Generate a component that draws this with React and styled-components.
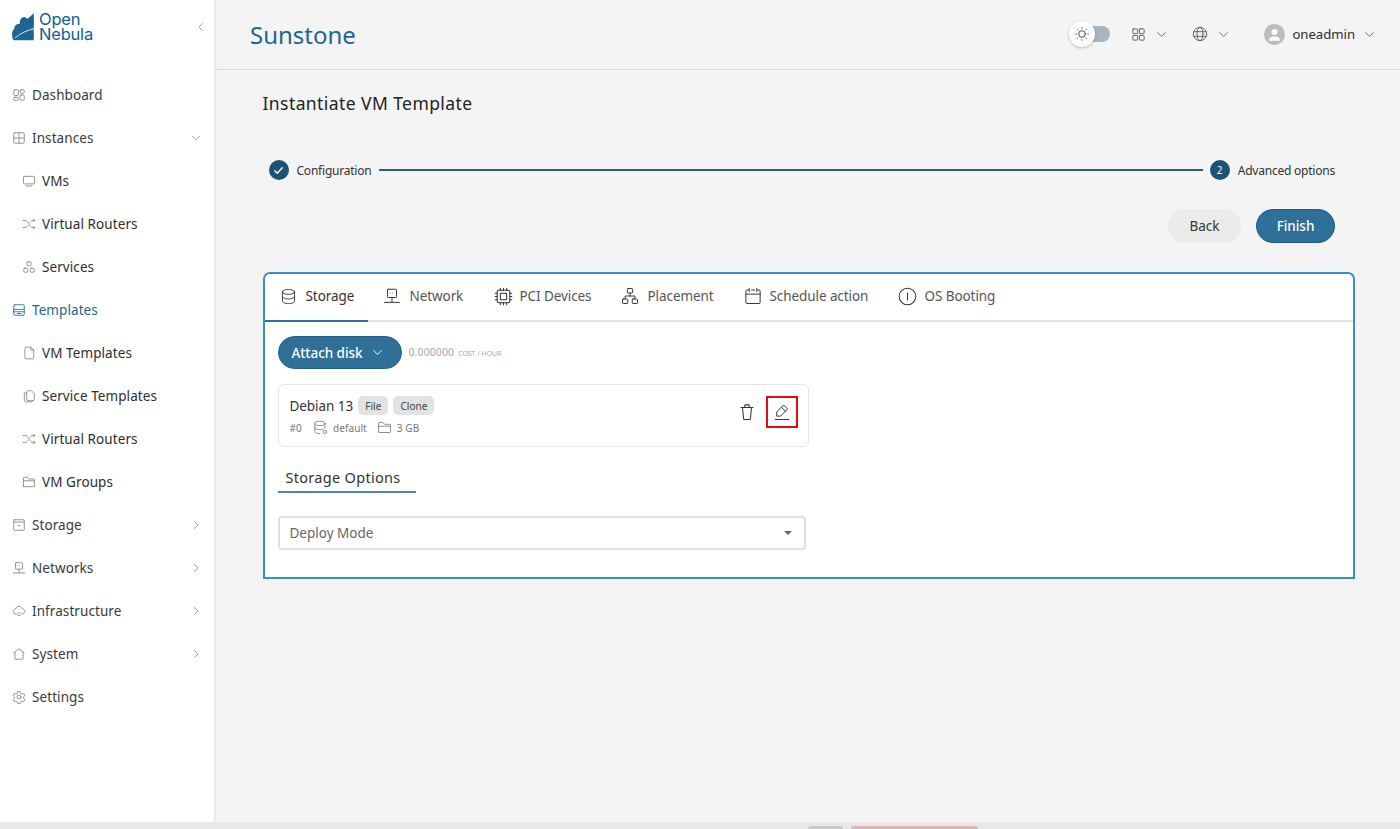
import React from "react";
import styled, { createGlobalStyle } from "styled-components";

const FONT = `"Noto Sans", "Open Sans", sans-serif`;

const Global = createGlobalStyle`
  html, body { margin: 0; padding: 0; height: 100%; background: #f4f4f4; }
  #root { height: 829px; }
  * { box-sizing: border-box; }
  body { font-family: ${FONT}; color: #2b2b2b; overflow: hidden; }
`;

const Svg = styled.svg`
  width: ${(p) => p.$size || 16}px;
  height: ${(p) => p.$size || 16}px;
  flex: none;
  fill: none;
  stroke: ${(p) => p.$color || "currentColor"};
  stroke-width: ${(p) => p.$sw || 1.5};
  stroke-linecap: round;
  stroke-linejoin: round;
  display: block;
`;

const PATHS = {
  dashboard: <><rect x="3" y="3" width="8" height="10" rx="1.5" /><rect x="3" y="16" width="8" height="5" rx="1.5" /><rect x="14" y="3" width="7" height="6" rx="1.5" /><rect x="14" y="12" width="7" height="9" rx="1.5" /></>,
  instances: <><rect x="3" y="3" width="18" height="18" rx="2" /><path d="M12 3v18M3 12h18" /></>,
  monitor: <><rect x="2.5" y="4" width="19" height="13" rx="1.5" /><path d="M7 20.5h10" /></>,
  shuffle: <path d="M2 6h3.5c1.5 0 2.8.7 3.6 2l5.8 8c.8 1.3 2.1 2 3.6 2H22M2 18h3.5c1.5 0 2.8-.7 3.6-2l.9-1.2M14 9.2l.9-1.2c.8-1.3 2.1-2 3.6-2H22M19.5 3.5 22 6l-2.5 2.5M19.5 15.5 22 18l-2.5 2.5" />,
  services: <><rect x="8.5" y="3" width="7" height="7" rx="2" /><rect x="3" y="14" width="7" height="7" rx="2" /><rect x="14" y="14" width="7" height="7" rx="2" /></>,
  templates: <><rect x="3" y="3" width="18" height="18" rx="1.5" /><path d="M3 11h18M3 15h18M9 18h6" /></>,
  file: <path d="M5 4a2 2 0 0 1 2-2h8l5 5v13a2 2 0 0 1-2 2H7a2 2 0 0 1-2-2zM15 2v5h5" />,
  files: <><path d="M8 5a2 2 0 0 1 2-2h6l5 5v10a2 2 0 0 1-2 2H10a2 2 0 0 1-2-2z" /><path d="M8 6H6a2 2 0 0 0-2 2v11a3 3 0 0 0 3 3h9a2 2 0 0 0 2-2" /></>,
  folder: <path d="M2.5 19V5a1 1 0 0 1 1-1h6l2.5 3h8.5a1 1 0 0 1 1 1v11a1 1 0 0 1-1 1h-17a1 1 0 0 1-1-1zM2.5 10h19" />,
  archive: <><rect x="3" y="3" width="18" height="18" rx="1" /><path d="M3 7h18M10.5 13h3" /></>,
  network: <><rect x="6" y="3" width="12" height="11" rx="1" /><path d="M12 14v6M2 20.5h20M9.5 8h.01M13 8h.01" /></>,
  cloud: <><path d="M6.5 17C4 17 2 15.1 2 12.7c0-2.3 1.8-4.1 4.1-4.3C6.8 5.8 9.2 4 12 4s5.2 1.8 5.9 4.4c2.3.2 4.1 2 4.1 4.3 0 2.4-2 4.3-4.5 4.3" /><path d="M9 16c.6-1.5 4-2.5 6 0M9 18c1 2.5 5 3 6 .5" /></>,
  home: <path d="M3 10 12 3l9 7M5 9v11a1 1 0 0 0 1 1h12a1 1 0 0 0 1-1V9" />,
  settings: <><circle cx="12" cy="12" r="3.5" /><path d="M10 2.5h4l.7 3 2.5 1.4 3-.9 2 3.4-2.3 2.1v2.9l2.3 2.1-2 3.4-3-.9-2.5 1.4-.7 3h-4l-.7-3-2.5-1.4-3 .9-2-3.4 2.3-2.1V11.6L1.8 9.500l2-3.400 3 .9 2.500-1.400z" /></>,
  chevL: <path d="M15 5l-7 7 7 7" />,
  chevD: <path d="M5 8.5l7 7 7-7" />,
  chevR: <path d="M9 5l7 7-7 7" />,
  sun: <><circle cx="12" cy="12" r="5" /><path d="M12 2.5v1M12 20.5v1M2.5 12h1M20.5 12h1M5.3 5.3l.7.7M18 18l.7.7M5.3 18.7l.7-.7M18 6l.7-.7" /></>,
  apps: <><rect x="3" y="3" width="7.5" height="7.5" rx="1" /><rect x="13.5" y="3" width="7.5" height="7.5" rx="1" /><rect x="3" y="13.5" width="7.5" height="7.5" rx="1" /><rect x="13.5" y="13.5" width="7.5" height="7.5" rx="1" /></>,
  globe: <><circle cx="12" cy="12" r="10" /><ellipse cx="12" cy="12" rx="4.5" ry="10" /><path d="M2.8 8.5h18.4M2.8 15.5h18.4" /></>,
  database: <><ellipse cx="12" cy="5.5" rx="8.5" ry="3.5" /><path d="M3.5 5.5v13c0 1.9 3.8 3.500 8.500 3.500s8.500-1.600 8.500-3.500v-13M3.500 12c0 1.900 3.800 3.500 8.500 3.500s8.500-1.600 8.500-3.500" /></>,
  dbGear: <><ellipse cx="11" cy="5.5" rx="8" ry="3.5" /><path d="M3 5.5v13c0 1.8 3.3 3.3 7.5 3.500M19 5.500V13M3 12c0 1.900 3.600 3.500 8 3.500 2 0 3.800-.3 5-.9" /><circle cx="19" cy="19" r="2.800" /></>,
  pci: <><rect x="4" y="4" width="16" height="16" rx="2" /><rect x="8" y="8" width="8" height="8" rx="1" /><path d="M8 1.5V4M12 1.5V4M16 1.5V4M8 20v2.5M12 20v2.5M16 20v2.5M1.5 8H4M1.5 12H4M1.5 16H4M20 8h2.5M20 12h2.5M20 16h2.5" /></>,
  placement: <><rect x="8.5" y="2" width="7" height="6" rx="1" /><rect x="2" y="16" width="7" height="6" rx="1" /><rect x="15" y="16" width="7" height="6" rx="1" /><path d="M12 8v4M5.5 16v-4h13v4" /></>,
  calendar: <path d="M6 4H4a1.5 1.5 0 0 0-1.5 1.5v15A1.5 1.5 0 0 0 4 22h16a1.5 1.5 0 0 0 1.5-1.5v-15A1.5 1.5 0 0 0 20 4h-2M2.5 9.5h19M7 2v4M17 2v4M10 4h4" />,
  info: <><circle cx="12" cy="12" r="10.5" /><path d="M12 7.5v9" /></>,
  trash: <path d="M4 6h16M6 6l1.5 15a1 1 0 0 0 1 1h7a1 1 0 0 0 1-1L18 6M9 6V3.5a1 1 0 0 1 1-1h4a1 1 0 0 1 1 1V6" />,
  pencil: <path d="M14.5 3l5 5L10 17.5H5v-5zM11.5 6l5 5M3 22h18" />,
  check: <path d="M6 12.5l4 4 8-9" />,
};

const Icon = ({ name, size, color, sw }) => (
  <Svg viewBox="0 0 24 24" $size={size} $color={color} $sw={sw}>{PATHS[name]}</Svg>
);

const Page = styled.div`
  display: flex;
  flex-direction: column;
  height: 829px;
  overflow: hidden;
`;
const Body = styled.div`
  flex: 1;
  display: flex;
  min-height: 0;
`;
const Sidebar = styled.aside`
  width: 215px;
  flex: none;
  background: #fff;
  border-right: 1px solid #e6e6e6;
  box-shadow: 1px 0 2px rgba(0, 0, 0, 0.04);
  display: flex;
  flex-direction: column;
`;
const Brand = styled.div`
  height: 73px;
  display: flex;
  align-items: flex-start;
  padding: 12px 7px 0 12px;
  gap: 4px;
`;
const LogoMark = styled.svg`
  width: 22px;
  height: 28px;
  flex: none;
  margin-top: 1px;
`;
const BrandText = styled.div`
  width: 58px;
  font: 400 16.5px/15px "Inter", "Liberation Sans", sans-serif;
  color: #0f5d96;
  letter-spacing: -0.2px;
  padding-left: 1px;
`;
const Collapse = styled.div`
  margin-left: auto;
  margin-top: 9px;
  color: #8a8a8a;
`;
const Item = styled.div`
  height: 43px;
  display: flex;
  align-items: center;
  padding-left: ${(p) => (p.$sub ? 22 : 12)}px;
  padding-right: 12px;
  gap: 6px;
  font-size: 13.5px;
  letter-spacing: 0.08px;
  color: ${(p) => (p.$active ? "#1f6593" : p.$sub ? "#2e2e2e" : "#3a3a3a")};
`;
const ItemIcon = styled.span`
  color: ${(p) => (p.$active ? "#1f6593" : "#808080")};
  display: flex;
  width: 14px;
  justify-content: center;
`;
const ItemChevron = styled.span`
  margin-left: auto;
  color: #808080;
  display: flex;
`;

const Main = styled.main`
  flex: 1;
  min-width: 0;
  display: flex;
  flex-direction: column;
`;
const Header = styled.header`
  height: 70px;
  flex: none;
  border-bottom: 1px solid #d9d9d9;
  display: flex;
  align-items: center;
  padding: 0 24px 1px 35px;
`;
const AppTitle = styled.div`
  font-size: 24px;
  letter-spacing: 0;
  color: #1f6593;
  margin-right: auto;
`;
const Toggle = styled.div`
  position: relative;
  width: 28px;
  height: 16px;
  border-radius: 8px;
  background: #a9b4c2;
  margin-right: 21px;
`;
const Thumb = styled.div`
  position: absolute;
  left: -13px;
  top: -5px;
  width: 26px;
  height: 26px;
  border-radius: 50%;
  background: #fff;
  box-shadow: 0 1px 3px rgba(0, 0, 0, 0.25);
  display: flex;
  align-items: center;
  justify-content: center;
  color: #333;
`;
const HeadGroup = styled.div`
  display: flex;
  align-items: center;
  gap: ${(p) => p.$gap || 9}px;
  margin-right: ${(p) => p.$mr || 0}px;
  color: #555;
`;
const Avatar = styled.div`
  width: 21px;
  height: 21px;
  border-radius: 50%;
  background: #bdbdbd;
  display: flex;
  align-items: center;
  justify-content: center;
  overflow: hidden;
  margin-right: -1px;
`;
const UserName = styled.span`
  font-size: 13.2px;
  letter-spacing: -0.05px;
  color: #2e2e2e;
`;

const Content = styled.div`
  flex: 1;
  padding: 0 45px 0 47.5px;
  display: flex;
  flex-direction: column;
`;
const PageTitle = styled.h1`
  margin: 20px 0 0;
  height: 27px;
  font-size: 17.5px;
  line-height: 27px;
  font-weight: 400;
  color: #222;
  letter-spacing: 0.42px;
`;
const Stepper = styled.div`
  margin-top: 42px;
  height: 22px;
  margin-right: 20px;
  padding-left: 6px;
  display: flex;
  align-items: center;
  font-size: 12px;
  color: #333;
`;
const StepDot = styled.div`
  width: 20px;
  height: 20px;
  border-radius: 50%;
  background: #1b5376;
  color: #fff;
  font-size: 10px;
  display: flex;
  align-items: center;
  justify-content: center;
  flex: none;
`;
const StepLabel = styled.span`
  margin-left: 8px;
  flex: none;
  letter-spacing: -0.22px;
`;
const StepLine = styled.div`
  flex: 1;
  height: 2px;
  background: #2c5d7e;
  margin: 0 7px 0 8px;
`;
const Actions = styled.div`
  margin-top: 28px;
  margin-right: 20px;
  display: flex;
  justify-content: flex-end;
  gap: 15px;
`;
const Pill = styled.button`
  height: ${(p) => p.$h || 34}px;
  width: ${(p) => p.$w}px;
  border-radius: 17px;
  border: 1px solid ${(p) => (p.$primary ? "#1f5e86" : "#ebebeb")};
  background: ${(p) => (p.$primary ? "#2f6f98" : "#ebebeb")};
  color: ${(p) => (p.$primary ? "#fff" : "#333")};
  font: ${(p) => (p.$primary ? 500 : 400)} 13.5px ${FONT};
  letter-spacing: -0.05px;
  display: flex;
  align-items: center;
  justify-content: center;
  gap: 8px;
  padding: 0 ${(p) => p.$pr || 0}px 0 0;
`;
const Card = styled.section`
  margin-top: 29px;
  height: 307px;
  background: #fff;
  border: 2px solid #3392c2;
  border-radius: 7px 7px 0 0;
  display: flex;
  flex-direction: column;
`;
const Tabs = styled.nav`
  height: 48px;
  flex: none;
  display: flex;
  border-bottom: 2px solid #e2e2e2;
`;
const Tab = styled.div`
  width: ${(p) => p.$w}px;
  flex: none;
  padding-left: ${(p) => p.$pl}px;
  padding-bottom: 2px;
  display: flex;
  align-items: center;
  gap: ${(p) => p.$gap}px;
  font-size: 13.5px;
  letter-spacing: -0.08px;
  color: ${(p) => (p.$active ? "#333" : "#555")};
  margin-bottom: -2px;
  border-bottom: 2px solid ${(p) => (p.$active ? "#2f6f98" : "transparent")};
`;
const TabIcon = styled.span`
  display: flex;
  color: #333;
`;
const Panel = styled.div`
  padding: 14px 13px 0;
`;
const AttachRow = styled.div`
  display: flex;
  align-items: center;
  gap: 7px;
`;
const Cost = styled.span`
  font-size: 10.5px;
  color: #a8a8a8;
  letter-spacing: 0.1px;
  margin-bottom: 2px;
`;
const CostUnit = styled.span`
  font-size: 7px;
  margin-left: 4px;
  letter-spacing: -0.05px;
  text-transform: uppercase;
`;
const DiskCard = styled.div`
  margin-top: 15px;
  width: 531px;
  height: 63px;
  border: 1px solid #e6e6e6;
  border-radius: 6px;
  display: flex;
  align-items: center;
  padding: 0 10px 0 11px;
`;
const DiskInfo = styled.div`
  display: flex;
  flex-direction: column;
  gap: 5px;
`;
const DiskTop = styled.div`
  display: flex;
  align-items: center;
  gap: 5px;
  font-size: 13.5px;
  color: #333;
  letter-spacing: -0.05px;
`;
const Chip = styled.span`
  height: 19px;
  padding: 0 7px;
  border-radius: 5px;
  background: #e2e2e2;
  font-size: 10px;
  color: #444;
  letter-spacing: 0.05px;
  display: flex;
  align-items: center;
`;
const DiskMeta = styled.div`
  display: flex;
  align-items: center;
  font-size: 10px;
  color: #777;
  gap: 5px;
  letter-spacing: 0.1px;
`;
const MetaGap = styled.span`
  width: ${(p) => p.$w}px;
`;
const DiskActions = styled.div`
  margin-left: auto;
  display: flex;
  align-items: center;
  gap: 10px;
  color: #333;
  padding-bottom: 7px;
`;
const Highlight = styled.div`
  width: 32px;
  height: 32px;
  border: 2px solid #e60c0c;
  display: flex;
  align-items: center;
  justify-content: center;
`;
const SectionTitle = styled.h2`
  margin: 20px 0 0;
  width: 138px;
  height: 26px;
  padding-left: 8px;
  font-size: 14.5px;
  line-height: 20px;
  font-weight: 400;
  color: #333;
  letter-spacing: 0.3px;
  border-bottom: 2px solid #5a82a2;
`;
const Select = styled.div`
  margin-top: 23px;
  width: 528px;
  height: 34px;
  border: 2px solid #e0e0e0;
  border-radius: 4px;
  display: flex;
  align-items: center;
  padding: 0 12px 0 10px;
  font-size: 13.5px;
  letter-spacing: 0;
  color: #666;
`;
const Caret = styled.span`
  margin-left: auto;
  width: 0;
  height: 0;
  border-left: 4.5px solid transparent;
  border-right: 4.5px solid transparent;
  border-top: 4.5px solid #666;
`;
const BottomBar = styled.div`
  height: 7px;
  flex: none;
  background: #e8e8e8;
  display: flex;
  align-items: flex-end;
  padding-left: 808px;
  gap: 8px;
`;
const Stub = styled.div`
  width: ${(p) => p.$w}px;
  height: 3px;
  background: ${(p) => p.$c};
  border-radius: 5px 5px 0 0;
`;

const NAV = [
  { label: "Dashboard", icon: "dashboard" },
  { label: "Instances", icon: "instances", chev: "chevD" },
  { label: "VMs", icon: "monitor", sub: true },
  { label: "Virtual Routers", icon: "shuffle", sub: true },
  { label: "Services", icon: "services", sub: true },
  { label: "Templates", icon: "templates", active: true },
  { label: "VM Templates", icon: "file", sub: true },
  { label: "Service Templates", icon: "files", sub: true },
  { label: "Virtual Routers", icon: "shuffle", sub: true },
  { label: "VM Groups", icon: "folder", sub: true },
  { label: "Storage", icon: "archive", chev: "chevR" },
  { label: "Networks", icon: "network", chev: "chevR" },
  { label: "Infrastructure", icon: "cloud", chev: "chevR" },
  { label: "System", icon: "home", chev: "chevR" },
  { label: "Settings", icon: "settings" },
];

const TABS = [
  { label: "Storage", icon: "database", w: 103, pl: 15, gap: 9, size: 17, active: true },
  { label: "Network", icon: "network", w: 112, pl: 15, gap: 9, size: 18 },
  { label: "PCI Devices", icon: "pci", w: 127, pl: 14, gap: 7, size: 19 },
  { label: "Placement", icon: "placement", w: 123, pl: 14, gap: 9, size: 18 },
  { label: "Schedule action", icon: "calendar", w: 154, pl: 14, gap: 8, size: 18 },
  { label: "OS Booting", icon: "info", w: 130, pl: 14, gap: 8, size: 19 },
];

export default function App() {
  return (
    <Page>
      <Global />
      <Body>
        <Sidebar>
          <Brand>
            <LogoMark viewBox="0 0 66 84">
              <path fill="#1f6593" d="M65 0C60 8 52 12 46 18 43 13 36 10 30 14 24 18 22 26 24 32 14 32 6 38 7 47 1 52-1 62 1 72c.5 5 2 10 6 10h58c1-10 1-18 0-30 1-18 1-36 0-52z" />
              <path fill="none" stroke="#fff" strokeWidth="2.5" strokeLinecap="round" d="M10 74C26 60 46 52 66 47" />
            </LogoMark>
            <BrandText>Open Nebula</BrandText>
            <Collapse><Icon name="chevL" size={12} sw={1.5} /></Collapse>
          </Brand>
          {NAV.map((n, i) => (
            <Item key={i} $sub={n.sub} $active={n.active}>
              <ItemIcon $active={n.active}><Icon name={n.icon} size={14} sw={1.4} /></ItemIcon>
              {n.label}
              {n.chev && <ItemChevron><Icon name={n.chev} size={12} sw={1.5} /></ItemChevron>}
            </Item>
          ))}
        </Sidebar>
        <Main>
          <Header>
            <AppTitle>Sunstone</AppTitle>
            <Toggle><Thumb><Icon name="sun" size={16} sw={1.3} /></Thumb></Toggle>
            <HeadGroup $gap={9} $mr={24}><Icon name="apps" size={15} sw={1.4} /><Icon name="chevD" size={13} sw={1.5} /></HeadGroup>
            <HeadGroup $gap={9} $mr={34}><Icon name="globe" size={16} sw={1.3} /><Icon name="chevD" size={13} sw={1.5} /></HeadGroup>
            <HeadGroup $gap={8}>
              <Avatar>
                <svg width="21" height="21" viewBox="0 0 21 21"><circle cx="10.5" cy="8" r="3" fill="#fff" /><path fill="#fff" d="M5 16c0-2.5 3-3.5 5.5-3.5S16 13.5 16 16c0 .5-.5.8-1 .8H6c-.5 0-1-.3-1-.8z" /></svg>
              </Avatar>
              <UserName>oneadmin</UserName>
              <Icon name="chevD" size={13} sw={1.5} />
            </HeadGroup>
          </Header>
          <Content>
            <PageTitle>Instantiate VM Template</PageTitle>
            <Stepper>
              <StepDot><Icon name="check" size={15} sw={2.2} /></StepDot>
              <StepLabel>Configuration</StepLabel>
              <StepLine />
              <StepDot>2</StepDot>
              <StepLabel>Advanced options</StepLabel>
            </Stepper>
            <Actions>
              <Pill $w={73}>Back</Pill>
              <Pill $w={79} $primary>Finish</Pill>
            </Actions>
            <Card>
              <Tabs>
                {TABS.map((t) => (
                  <Tab key={t.label} $w={t.w} $pl={t.pl} $gap={t.gap} $active={t.active}>
                    <TabIcon><Icon name={t.icon} size={t.size} sw={1.3} /></TabIcon>
                    {t.label}
                  </Tab>
                ))}
              </Tabs>
              <Panel>
                <AttachRow>
                  <Pill $w={124} $h={33} $pr={4} $primary>Attach disk <Icon name="chevD" size={13} sw={1.8} /></Pill>
                  <Cost>0.000000<CostUnit>cost / hour</CostUnit></Cost>
                </AttachRow>
                <DiskCard>
                  <DiskInfo>
                    <DiskTop>Debian 13 <Chip>File</Chip><Chip>Clone</Chip></DiskTop>
                    <DiskMeta>
                      #0 <MetaGap $w={1} />
                      <Icon name="dbGear" size={15} sw={1.3} />
                      default <MetaGap $w={0} />
                      <Icon name="folder" size={15} sw={1.3} />
                      3 GB
                    </DiskMeta>
                  </DiskInfo>
                  <DiskActions>
                    <Icon name="trash" size={18} sw={1.4} />
                    <Highlight><Icon name="pencil" size={18} sw={1.3} /></Highlight>
                  </DiskActions>
                </DiskCard>
                <SectionTitle>Storage Options</SectionTitle>
                <Select>Deploy Mode<Caret /></Select>
              </Panel>
            </Card>
          </Content>
        </Main>
      </Body>
      <BottomBar>
        <Stub $w={35} $c="#c8c8c8" />
        <Stub $w={127} $c="#dcb8b8" />
      </BottomBar>
    </Page>
  );
}
